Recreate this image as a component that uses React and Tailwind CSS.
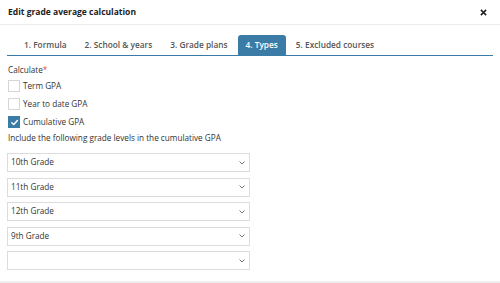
import React, { useState } from 'react';

const tabs = ['1. Formula', '2. School & years', '3. Grade plans', '4. Types', '5. Excluded courses'];

function Check({ checked, label }) {
    return (
        <div className="flex items-center gap-[3px] h-[18px] shrink-0">
            <span className={`w-[12px] h-[12px] flex items-center justify-center border ${checked ? 'bg-[#3a7ca5] border-[#3a7ca5]' : 'bg-white border-[#d6d6d6]'}`}>
                {checked && (
                    <svg width="9" height="9" viewBox="0 0 10 10" fill="none">
                        <path d="M2 5.2 L4.2 7.3 L8.2 2.8" stroke="white" strokeWidth="1.6" strokeLinecap="round" strokeLinejoin="round" />
                    </svg>
                )}
            </span>
            <span className="text-[8.2px] text-[#333]">{label}</span>
        </div>
    );
}

function Select({ value }) {
    return (
        <div className="w-[243px] h-[19px] shrink-0 border border-[#dcdcdc] bg-white flex items-center justify-between pl-[3px] pr-[4px]">
            <span className="text-[8.2px] text-[#333]">{value}</span>
            <svg width="6" height="4" viewBox="0 0 6 4" fill="none">
                <path d="M0.5 0.5 L3 3 L5.5 0.5" stroke="#666" strokeWidth="0.9" />
            </svg>
        </div>
    );
}

export default function App() {
    const [active] = useState(3);
    return (
        <div className="w-[500px] h-[283px] bg-white overflow-hidden flex flex-col font-['Open_Sans',sans-serif]">
            <div className="h-[25px] flex items-center justify-between px-[8px] border-b border-[#ececec] shrink-0">
                <h1 className="text-[8.5px] font-bold text-[#222]">Edit grade average calculation</h1>
                <svg width="7" height="7" viewBox="0 0 8 8" className="mr-[5px]">
                    <path d="M1 1 L7 7 M7 1 L1 7" stroke="#222" strokeWidth="1.8" />
                </svg>
            </div>

            <div className="mx-[7px] mt-[10px] border-b border-[#3a7ca5] flex pl-[9px] gap-[2px] h-[21px] items-end shrink-0">
                {tabs.map((t, i) => (
                    <div key={t} className={`h-[20px] px-[8px] flex items-center text-[8.3px] font-semibold rounded-t-[3px] ${i === active ? 'bg-[#3a7ca5] text-white' : 'text-[#555]'}`}>
                        {t}
                    </div>
                ))}
            </div>

            <div className="px-[8px] pt-[8px] flex flex-col flex-1">
                <div className="text-[8.2px] text-[#333] h-[12px] flex items-center shrink-0">
                    Calculate<span className="text-[#d9534f]">*</span>
                </div>
                <div className="flex flex-col mt-[1px]">
                    <Check label="Term GPA" />
                    <Check label="Year to date GPA" />
                    <Check checked label="Cumulative GPA" />
                </div>
                <div className="text-[8.2px] text-[#333] mt-[1px] h-[12px] flex items-center shrink-0">
                    Include the following grade levels in the cumulative GPA
                </div>
                <div className="flex flex-col gap-[5.5px] mt-[9px] -ml-[1px]">
                    <Select value="10th Grade" />
                    <Select value="11th Grade" />
                    <Select value="12th Grade" />
                    <Select value="9th Grade" />
                    <Select value="" />
                </div>
            </div>
            <div className="h-[2px] bg-[#eeeeee] shrink-0" />
        </div>
    );
}
